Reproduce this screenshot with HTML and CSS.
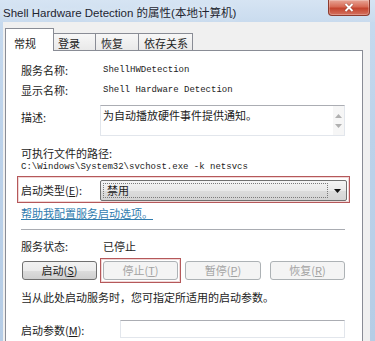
FILE: index.html
```html
<!DOCTYPE html>
<html lang="zh-CN">
<head>
<meta charset="utf-8">
<title>Shell Hardware Detection 的属性</title>
<link rel="stylesheet" href="styles.css">
</head>
<body>
<div class="window">
  <div class="titlebar">
    <span class="title">Shell Hardware Detection 的属性(本地计算机)</span>
    <div class="close">
      <svg width="10" height="9" viewBox="0 0 10 9"><path d="M1.5 1 L8.5 8 M8.5 1 L1.5 8" stroke="#5a1a10" stroke-width="3" opacity="0.5"/><path d="M1.5 1 L8.5 8 M8.5 1 L1.5 8" stroke="#fff" stroke-width="2"/></svg>
    </div>
  </div>
  <div class="client">
    <div class="tabs">
      <div class="tab active">常规</div>
      <div class="tab t2">登录</div>
      <div class="tab t3">恢复</div>
      <div class="tab t4">依存关系</div>
    </div>
    <div class="panel">
      <div class="row r20"><span class="label">服务名称:</span><span class="value mono">ShellHWDetection</span></div>
      <div class="row r20"><span class="label">显示名称:</span><span class="value mono">Shell Hardware Detection</span></div>
      <div class="row desc-row">
        <span class="label desc-label">描述:</span>
        <div class="textarea">
          <span class="ta-text">为自动播放硬件事件提供通知。</span>
          <div class="ta-scroll">
            <svg width="7" height="4" viewBox="0 0 7 4"><path d="M0 4 L3.5 0 L7 4 Z" fill="#b0b0b0"/></svg>
            <svg width="7" height="4" viewBox="0 0 7 4"><path d="M0 0 L3.5 4 L7 0 Z" fill="#b0b0b0"/></svg>
          </div>
        </div>
      </div>
      <div class="line path-label">可执行文件的路径:</div>
      <div class="line mono path">C:\Windows\System32\svchost.exe -k netsvcs</div>
      <div class="redbox startup">
        <span class="label">启动类型(<u>E</u>):</span>
        <div class="select">
          <div class="sel-text">禁用</div>
          <div class="sel-arrow"><svg width="7" height="4" viewBox="0 0 7 4"><path d="M0 0 L7 0 L3.5 4 Z" fill="#111"/></svg></div>
        </div>
      </div>
      <div class="line link">帮助我配置服务启动选项。</div>
      <div class="separator"></div>
      <div class="line status"><span class="label">服务状态:</span><span class="value">已停止</span></div>
      <div class="buttons">
        <div class="btn enabled b1">启动(<u>S</u>)</div>
        <div class="redbox btnbox"><div class="btn disabled">停止(<u>T</u>)</div></div>
        <div class="btn disabled b3">暂停(<u>P</u>)</div>
        <div class="btn disabled b4">恢复(<u>R</u>)</div>
      </div>
      <div class="line note">当从此处启动服务时，您可指定所适用的启动参数。</div>
      <div class="row param-row"><span class="label param-label">启动参数(<u>M</u>):</span><div class="input"></div></div>
    </div>
  </div>
</div>
</body>
</html>
```
FILE: styles.css
```css
* { box-sizing: border-box; }
html, body { margin: 0; padding: 0; }
body {
  width: 375px;
  height: 341px;
  overflow: hidden;
  background: linear-gradient(180deg, #c8dbef 0%, #bcd2ea 40%, #b6cde6 100%);
  font-family: "Noto Sans CJK SC", "Liberation Sans", sans-serif;
  color: #1c1c1c;
}
.window { width: 375px; height: 341px; display: flex; flex-direction: column; }
.titlebar {
  height: 22px;
  display: flex;
  justify-content: space-between;
  align-items: flex-start;
  background: linear-gradient(180deg, #d6e4f3 0%, #c9dbee 100%);
}
.title {
  font-family: "Liberation Sans", "Noto Sans CJK SC", sans-serif;
  font-size: 11.5px;
  line-height: 14px;
  padding: 6px 0 0 3px;
  color: #1e2530;
  text-shadow: 0 0 6px #eef4fb;
}
.close {
  width: 42px;
  height: 16px;
  margin-right: 5px;
  border: 1px solid #8d3b2e;
  border-top: none;
  border-radius: 0 0 4px 4px;
  background: linear-gradient(180deg, #e8a596 0%, #d76a55 45%, #c4442e 55%, #d57260 100%);
  display: flex;
  align-items: center;
  justify-content: center;
  box-shadow: inset 0 0 0 1px rgba(255,255,255,0.25);
}
.client {
  flex: 1;
  margin: 0 5px 0 3px;
  background: #f0f0f0;
  padding: 6px 7px 0 2px;
  display: flex;
  flex-direction: column;
}
.tabs { display: flex; align-items: flex-end; height: 22px; position: relative; z-index: 1; }
.tab {
  font-size: 11px;
  line-height: 14px;
  height: 17px;
  padding-top: 2px;
  border: 1px solid #898c95;
  border-bottom: none;
  background: linear-gradient(180deg, #f7f7f7 0%, #e9e9e9 100%);
  color: #1c1c1c;
}
.tab.active {
  height: 22px;
  width: 49px;
  padding: 7px 0 0 8px;
  background: #fff;
  margin-bottom: -1px;
  height: 23px;
}
.t2 { width: 42px; padding-left: 4px; border-left: none; }
.t3 { width: 43px; padding-left: 5px; border-left: none; }
.t4 { width: 54px; padding-left: 5px; border-left: none; }
.panel {
  flex: 1;
  background: #fff;
  border: 1px solid #898c95;
  border-bottom: none;
  padding: 9px 17px 0 15px;
  font-size: 11px;
  display: flex;
  flex-direction: column;
}
.row { display: flex; align-items: center; }
.r20 { height: 20px; }
.label { width: 79px; flex: none; line-height: 14px; white-space: nowrap; }
.value { padding-left: 3px; line-height: 14px; white-space: nowrap; }
.mono { font-family: "Liberation Mono", monospace; font-size: 9px; letter-spacing: 0; }
.line { height: 14px; line-height: 14px; white-space: nowrap; }
.desc-row { margin-top: 5px; height: 31px; align-items: flex-start; }
.desc-label { padding-top: 5px; }
.textarea {
  flex: 1;
  height: 31px;
  border: 1px solid #e2e6ec;
  border-top-color: #abadb3;
  display: flex;
  justify-content: space-between;
}
.ta-text { padding: 2px 0 0 2px; line-height: 14px; font-size: 11px; }
.ta-scroll {
  width: 11px;
  height: 100%;
  display: flex;
  flex-direction: column;
  align-items: center;
  justify-content: space-around;
  padding: 5px 0 4px;
  background: #f6f6f6;
}
.path-label { margin-top: 10px; }
.path { font-size: 9px; }
.redbox {
  border: 1px solid #b5585a;
  box-shadow: inset 0 0 0 1px #f0d6d6;
}
.startup {
  margin: 2px -5px 0 -4px;
  height: 27px;
  padding: 3px 2px 1px 3px;
  display: flex;
  align-items: flex-start;
}
.startup .label { padding-top: 3px; }
.select {
  flex: 1;
  height: 21px;
  border: 1px solid #707070;
  border-radius: 2px;
  background: linear-gradient(180deg, #f4f4f4 0%, #e9e9e9 50%, #dcdcdc 51%, #d4d4d4 100%);
  display: flex;
  padding: 2px 0 2px 2px;
}
.sel-text {
  flex: 1;
  border: 1px dotted #7a7a7a;
  line-height: 13px;
  padding-left: 3px;
  font-size: 11px;
}
.sel-arrow { width: 18px; display: flex; align-items: center; justify-content: center; }
.link { margin-top: 3px; color: #2f7bae; text-decoration: underline; }
.separator { margin-top: 9px; height: 2px; border-top: 1px solid #a9acb2; border-bottom: 1px solid #fff; }
.status { margin-top: 8px; display: flex; }
.buttons { margin-top: 5px; height: 25px; display: flex; align-items: center; }
.btn {
  width: 75px;
  height: 19px;
  border-radius: 3px;
  font-size: 11px;
  line-height: 17px;
  text-align: center;
}
.btn u { text-decoration: underline; }
.enabled {
  border: 1px solid #707070;
  background: linear-gradient(180deg, #f2f2f2 0%, #ebebeb 50%, #dddddd 51%, #cfcfcf 100%);
  color: #1c1c1c;
}
.disabled {
  border: 1px solid #adb2b5;
  background: #f4f4f4;
  color: #a3a3a3;
}
.b1 { margin-left: 1px; }
.btnbox { margin-left: 3px; height: 25px; padding: 2px; display: flex; align-items: center; }
.b3 { margin-left: 4px; width: 76px; }
.b4 { margin-left: 9px; }
.note { margin-top: 7px; }
.param-row { margin-top: 16px; height: 18px; }
.param-label { width: 99px; padding-top: 2px; }
.input {
  flex: 1;
  height: 18px;
  border: 1px solid #e2e6ec;
  border-top-color: #abadb3;
  background: #fff;
}
```
